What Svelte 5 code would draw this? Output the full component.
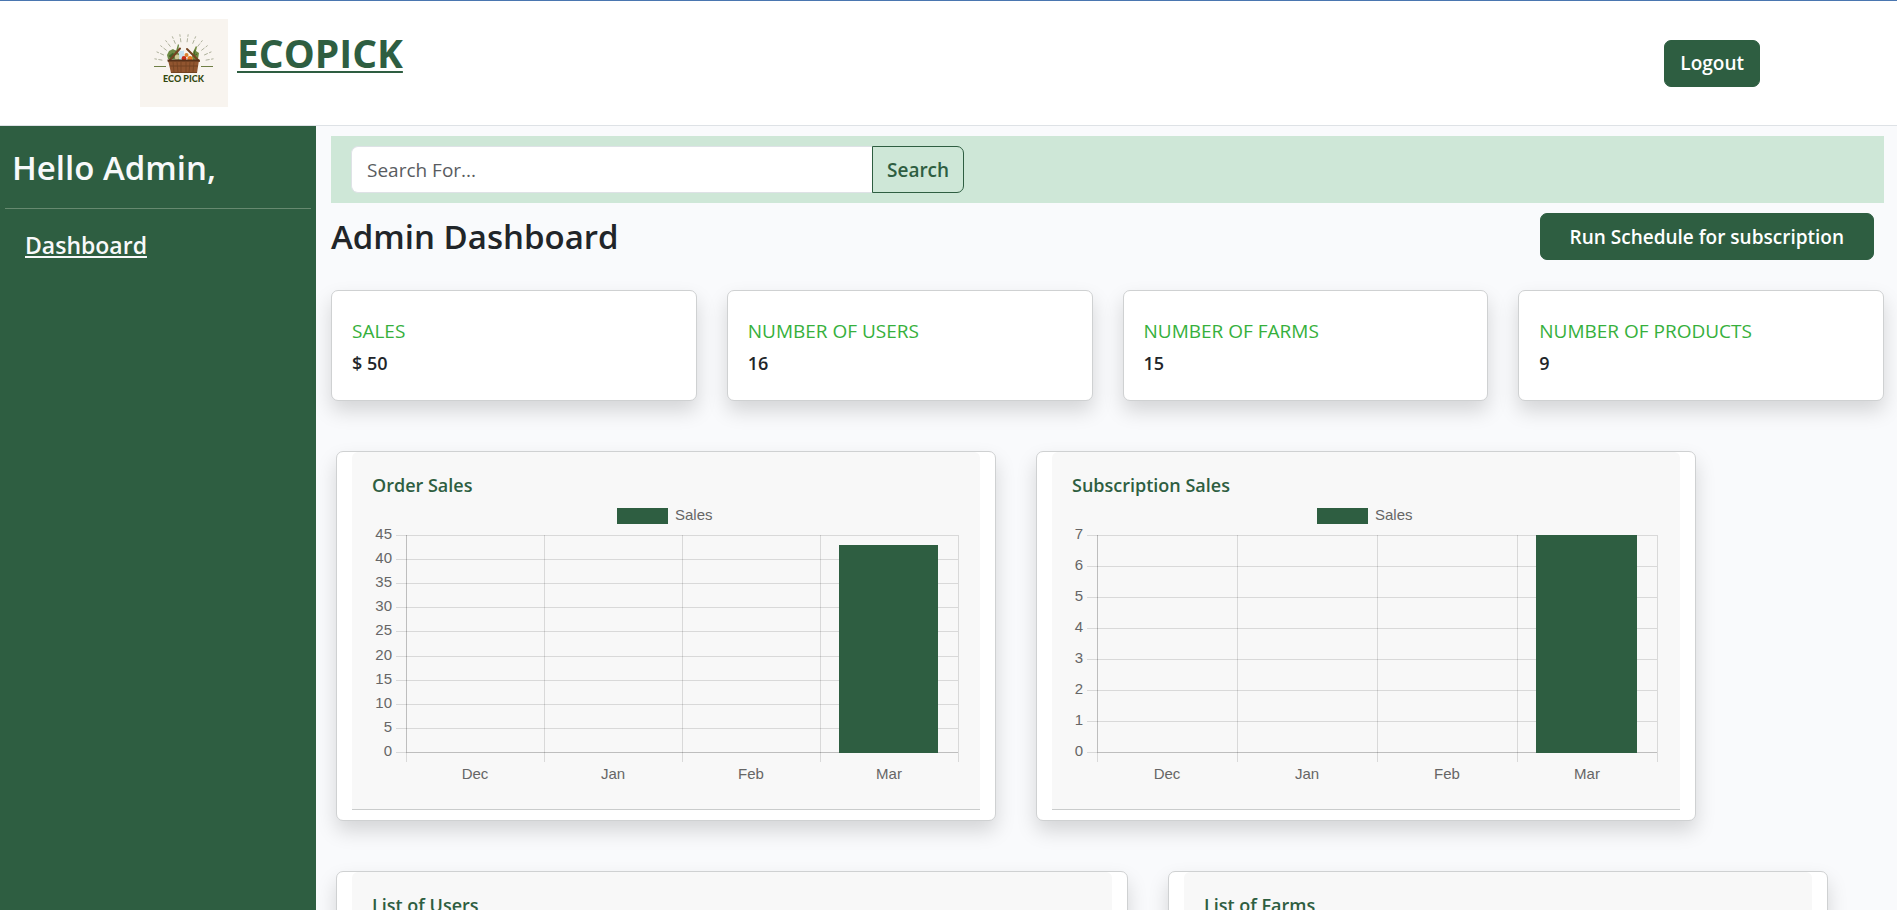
<script>
  const stats = [
    { label: 'SALES', value: '$ 50' },
    { label: 'NUMBER OF USERS', value: '16' },
    { label: 'NUMBER OF FARMS', value: '15' },
    { label: 'NUMBER OF PRODUCTS', value: '9' }
  ];
  const months = ['Dec', 'Jan', 'Feb', 'Mar'];
  const charts = [
    { title: 'Order Sales', max: 45, step: 5, left: 34, right: 586, data: [0, 0, 0, 43] },
    { title: 'Subscription Sales', max: 7, step: 1, left: 25, right: 585, data: [0, 0, 0, 7] }
  ];
  const lists = [
    { title: 'List of Users', size: 'wide' },
    { title: 'List of Farms', size: '' }
  ];
  const top = 31;
  const bottom = 248;

  const ticks = (c) => Array.from({ length: c.max / c.step + 1 }, (_, i) => i * c.step);
  const yOf = (c, v) => Math.round(bottom - ((bottom - top) * v) / c.max);
  const colWidth = (c) => (c.right - c.left) / months.length;
  const xOf = (c, i) => Math.round(c.left + colWidth(c) * i);

  const rays = [-80, -66, -52, -38, -23, -8, 8, 23, 38, 52, 66, 80];
</script>

{#snippet logo()}
  <svg class="logo" viewBox="0 0 88 88" role="img" aria-label="Eco Pick">
    <rect width="88" height="88" fill="#f8f4ef" />
    <g stroke="#a3a68f" stroke-width="0.8" stroke-dasharray="4 1.5 5 9">
      {#each rays as a}
        <line x1="44" y1="23" x2="44" y2="15" transform={`rotate(${a} 44 45)`} />
      {/each}
    </g>
    <path d="M14 47.5H26M61 47.5H73" stroke="#6f7f45" stroke-width="1" />
    <path d="M28 40l-1-4 2-4 4-2 3 2 2-7 1 1-1 7 3 6v2z" fill="#6d8a45" />
    <path d="M29 37l4-3 2 4-3 2zM35 31l2 4" fill="#3f6428" stroke="#3f6428" stroke-width="0.6" />
    <path d="M52 38l1-5 3-6 1 1-1 4 3 2-1 6-5 2z" fill="#71883f" />
    <path d="M55 31l-1 6 3-2" fill="none" stroke="#3f6428" stroke-width="1" />
    <rect x="39" y="31" width="5" height="10" rx="1.5" fill="#c6e1ef" />
    <rect x="40" y="30" width="3" height="2" fill="#f1f6f4" />
    <circle cx="46.5" cy="36" r="2" fill="#da8330" />
    <circle cx="44" cy="39.5" r="2.4" fill="#c92d18" />
    <circle cx="50" cy="39.5" r="2.6" fill="#e67a20" />
    <circle cx="37" cy="38" r="2.4" fill="#d0cb98" />
    <path d="M29 42L40 29.5M59 42L47 30" stroke="#754321" stroke-width="2" stroke-linecap="round" />
    <path d="M28 41H59L57 54H31Z" fill="#91552f" />
    <path d="M27.5 41.5H59.5" stroke="#563018" stroke-width="2" />
    <path d="M30 47H58M31 53.5H57" stroke="#734322" stroke-width="1" />
    <path d="M33 43l1 10M37 43l1 10M41 43v10M46 43v10M50 43l-1 10M54 43l-1 10" stroke="#734322" stroke-width="0.8" />
    <text x="43.5" y="63" text-anchor="middle" class="logo-text">ECO PICK</text>
  </svg>
{/snippet}

{#snippet barChart(c)}
  <svg class="chart" viewBox="0 0 588 294" role="img" aria-label={c.title}>
    <rect x="245" y="4" width="51" height="16" fill="#2e5e41" />
    <text x="303" y="16">Sales</text>
    {#each ticks(c) as t}
      <rect x={c.left - 10} y={yOf(c, t)} width={c.right - c.left + 10} height="1" class="grid" />
      <text x={c.left - 14} y={yOf(c, t) + 4} text-anchor="end">{t}</text>
    {/each}
    {#each [0, 1, 2, 3, 4] as i}
      <rect x={xOf(c, i)} y={top} width="1" height={bottom - top + 10} class="grid" />
    {/each}
    <rect x={c.left} y={top} width="1" height={bottom - top} class="grid" />
    <rect x={c.left} y={bottom} width={c.right - c.left} height="1" class="grid" />
    {#each months as m, i}
      {#if c.data[i]}
        <rect
          x={xOf(c, i) + 19}
          y={yOf(c, c.data[i])}
          width={Math.round(colWidth(c) * 0.72)}
          height={bottom - yOf(c, c.data[i]) + 1}
          fill="#2e5e41"
        />
      {/if}
      <text x={c.left + colWidth(c) * (i + 0.5)} y="275" text-anchor="middle">{m}</text>
    {/each}
  </svg>
{/snippet}

<div class="page">
  <header>
    <a class="brand" href="#home">
      {@render logo()}
      <span>ECOPICK</span>
    </a>
    <button class="btn" type="button">Logout</button>
  </header>
  <div class="body">
    <aside>
      <h2>Hello Admin,</h2>
      <hr />
      <nav><a href="#dashboard">Dashboard</a></nav>
    </aside>
    <main>
      <form class="search" onsubmit={(e) => e.preventDefault()}>
        <input type="search" placeholder="Search For..." aria-label="Search" />
        <button class="btn outline" type="submit">Search</button>
      </form>
      <div class="title-row">
        <h1>Admin Dashboard</h1>
        <button class="btn run" type="button">Run Schedule for subscription</button>
      </div>
      <section class="stats">
        {#each stats as s}
          <article class="card stat">
            <p class="label">{s.label}</p>
            <p class="value">{s.value}</p>
          </article>
        {/each}
      </section>
      <section class="panels">
        {#each charts as c}
          <article class="card panel">
            <div class="inner">
              <h3>{c.title}</h3>
              {@render barChart(c)}
            </div>
          </article>
        {/each}
      </section>
      <section class="panels">
        {#each lists as l}
          <article class="card panel {l.size}">
            <div class="inner list"><h3>{l.title}</h3></div>
          </article>
        {/each}
      </section>
    </main>
  </div>
</div>

<style>
  :global(body) {
    margin: 0;
  }
  .page,
  .page * {
    box-sizing: border-box;
  }
  .page {
    height: 100vh;
    overflow: hidden;
    display: flex;
    flex-direction: column;
    background: #f9fafc;
    color: #212529;
    font-family: 'Segoe UI', 'Open Sans', 'Noto Sans', sans-serif;
    font-size: 19px;
    line-height: 30px;
  }
  h1,
  h2,
  h3,
  p {
    margin: 0;
  }
  header {
    flex: none;
    display: flex;
    align-items: center;
    justify-content: space-between;
    padding: 18px 137px 18px 140px;
    background: #fff;
    border-top: 1px solid #4a76b0;
    border-bottom: 1px solid #dee2e6;
  }
  .brand {
    display: flex;
    gap: 9px;
    color: #2e5e41;
    font-size: 39px;
    font-weight: 700;
    line-height: 68px;
    text-underline-offset: 3px;
    text-decoration-thickness: 2px;
  }
  .logo {
    width: 88px;
    height: 88px;
    display: block;
  }
  .logo-text {
    font-family: Lato, sans-serif;
    font-size: 9px;
    font-weight: 900;
    fill: #33480f;
  }
  .btn {
    height: 47px;
    padding: 0 15px;
    border: 1px solid #2e5e41;
    border-radius: 7px;
    background: #2e5e41;
    color: #fff;
    font-family: inherit;
    font-size: 19px;
    font-weight: 600;
    line-height: 30px;
    cursor: pointer;
  }
  .body {
    flex: 1;
    min-height: 0;
    display: flex;
  }
  aside {
    flex: none;
    width: 316px;
    padding: 19px 5px;
    background: #2e5e41;
    color: #f8f9fa;
  }
  aside h2 {
    padding-left: 7px;
    font-size: 33px;
    font-weight: 600;
    line-height: 46px;
  }
  hr {
    height: 1px;
    margin: 17px 0 16px;
    border: 0;
    background: #66896f;
  }
  nav {
    padding: 2px 20px;
    line-height: 36px;
  }
  nav a {
    color: #f8f9fa;
    font-size: 23px;
    font-weight: 600;
    text-underline-offset: 2px;
    text-decoration-thickness: 2px;
  }
  main {
    flex: 1;
    min-width: 0;
    padding: 10px 13px 0 15px;
  }
  .search {
    display: flex;
    padding: 10px 20px;
    background: #cee7d7;
  }
  .search input {
    width: 521px;
    height: 47px;
    padding: 0 15px;
    border: 1px solid #dee2e6;
    border-right: 0;
    border-radius: 7px 0 0 7px;
    background: #fff;
    font-family: inherit;
    font-size: 19px;
    outline: 0;
  }
  .search input::placeholder {
    color: #595c5f;
    opacity: 1;
  }
  .btn.outline {
    padding: 0 14px;
    background: transparent;
    color: #2e5e41;
    border-radius: 0 7px 7px 0;
  }
  .title-row {
    display: flex;
    align-items: center;
    justify-content: space-between;
    padding: 10px 10px 30px 0;
  }
  h1 {
    font-size: 33px;
    font-weight: 600;
    line-height: 46px;
  }
  .btn.run {
    padding: 0 29px;
  }
  .card {
    background: #fff;
    border: 1px solid #cfd1d2;
    border-radius: 7px;
    box-shadow: 0 10px 20px rgba(0, 0, 0, 0.15);
  }
  .stats {
    display: grid;
    grid-template-columns: repeat(4, 1fr);
    gap: 30px;
  }
  .stat {
    padding: 24px 20px 21px;
  }
  .stat p {
    line-height: 32px;
  }
  .stat .label {
    color: #36b03c;
  }
  .stat .value {
    font-size: 18px;
    font-weight: 600;
  }
  .panels {
    display: flex;
    gap: 40px;
    padding: 50px 0 0 5px;
  }
  .panel {
    flex: none;
    width: calc((100% + 36px) * 5 / 12);
    padding: 0 15px 10px;
  }
  .panel.wide {
    width: calc((100% + 36px) / 2);
  }
  .inner {
    padding: 18px 20px 11px;
    background: #f8f8f8;
    border-bottom: 1px solid #cacccc;
    border-radius: 6px 6px 0 0;
  }
  .inner.list {
    min-height: 300px;
  }
  h3 {
    padding-bottom: 4px;
    color: #2e5e41;
    font-size: 18px;
    font-weight: 600;
    line-height: 30px;
  }
  .chart {
    display: block;
    width: 100%;
  }
  .chart text {
    font-family: 'Liberation Sans', Arial, sans-serif;
    font-size: 15px;
    fill: #666;
  }
  .grid {
    fill: rgba(0, 0, 0, 0.12);
  }
</style>
